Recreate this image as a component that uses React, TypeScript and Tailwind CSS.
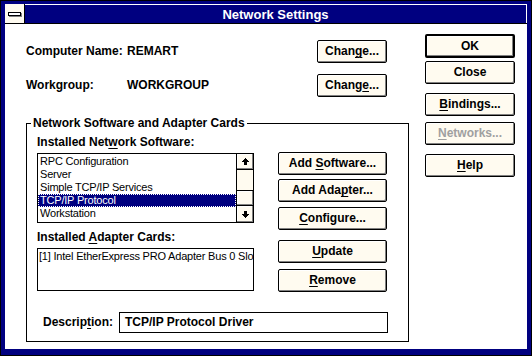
import React from "react";

type BtnProps = {
  children: React.ReactNode;
  className?: string;
  def?: boolean;
  disabled?: boolean;
};

function Btn({ children, className = "", def = false, disabled = false }: BtnProps) {
  return (
    <div
      className={`flex items-center justify-center bg-[#fffbf0] rounded-[2px] border-black ${
        def ? "border-2" : "border"
      } shadow-[inset_-1px_-1px_0_#808080,inset_1px_1px_0_#ffffff] text-[12px] leading-[15px] font-bold ${
        disabled ? "text-[#a0a0a0]" : "text-black"
      } ${className}`}
    >
      <span className="whitespace-pre">{children}</span>
    </div>
  );
}

function U({ children }: { children: React.ReactNode }) {
  return <span className="underline decoration-1 underline-offset-2">{children}</span>;
}

function Arrow({ down = false }: { down?: boolean }) {
  return (
    <svg width="7" height="7" viewBox="0 0 7 7" shapeRendering="crispEdges" className={down ? "rotate-180" : ""}>
      <rect x="3" y="0" width="1" height="1" fill="#000" />
      <rect x="2" y="1" width="3" height="1" fill="#000" />
      <rect x="1" y="2" width="5" height="1" fill="#000" />
      <rect x="0" y="3" width="7" height="1" fill="#000" />
      <rect x="2" y="4" width="3" height="3" fill="#000" />
    </svg>
  );
}

const items = ["RPC Configuration", "Server", "Simple TCP/IP Services", "TCP/IP Protocol", "Workstation"];

export default function App() {
  return (
    <div className="w-[532px] h-[356px] bg-[#000080] border border-black pt-[3px] pl-[4px] pr-[4px] pb-[6px] flex flex-col font-[family-name:Liberation_Sans,Arial,sans-serif] text-black">
      {/* Title bar */}
      <div className="flex h-[19px] shrink-0">
        <div className="w-[20px] bg-[#fffbf0] border-r border-black flex items-center justify-center">
          <div className="w-[13px] h-[4px] bg-white border border-black shadow-[1px_1px_0_#808080]" />
        </div>
        <div className="flex-1 bg-[#000080] border-t border-r border-white flex items-center justify-center text-white font-bold text-[13px] leading-[19px]">
          Network Settings
        </div>
      </div>
      <div className="h-px bg-black shrink-0" />

      {/* Client */}
      <div className="flex-1 bg-white flex pl-[21px] pt-[10px]">
        {/* Left part */}
        <div className="w-[383px] flex flex-col pt-[6px]">
          <div className="flex items-center h-[23px] text-[12px] leading-[15px] font-bold">
            <span className="w-[101px]">Computer Name:</span>
            <span className="w-[190px]">REMART</span>
            <Btn className="w-[70px] h-[23px]">
              Chan<U>g</U>e...
            </Btn>
          </div>
          <div className="flex items-center h-[23px] mt-[11px] text-[12px] leading-[15px] font-bold">
            <span className="w-[101px]">Workgroup:</span>
            <span className="w-[190px]">WORKGROUP</span>
            <Btn className="w-[70px] h-[23px]">
              Chang<U>e</U>...
            </Btn>
          </div>

          {/* Group box */}
          <div className="relative mt-[26px] border border-black pt-[11px] pl-[10px] pb-[8px]">
            <div className="absolute left-[4px] top-[-8px] bg-white px-[2px] text-[12px] leading-[15px] font-bold whitespace-nowrap">
              Network Software and Adapter Cards
            </div>
            <div className="flex items-start">
              <div className="w-[217px] flex flex-col">
                <div className="text-[12px] leading-[15px] font-bold h-[15px]">
                  Installed Net<U>w</U>ork Software:
                </div>
                <div className="mt-[3px] h-[70px] border border-black flex">
                  <div className="flex-1 pt-[1px] flex flex-col text-[11px] leading-[13px] tracking-[-0.2px]">
                    {items.map((it) => (
                      <div
                        key={it}
                        className={`h-[13px] pl-[2px] whitespace-nowrap ${
                          it === "TCP/IP Protocol"
                            ? "bg-[#000080] text-white outline-1 outline-dotted outline-white -outline-offset-1"
                            : ""
                        }`}
                      >
                        {it}
                      </div>
                    ))}
                  </div>
                  <div className="w-[17px] border-l border-black flex flex-col bg-[#fffbf0]">
                    <div className="h-[16px] border-b border-black flex items-center justify-center shadow-[inset_-1px_-1px_0_#808080,inset_1px_1px_0_#ffffff]">
                      <Arrow />
                    </div>
                    <div className="flex-1" />
                    <div className="h-[15px] border-t border-black shadow-[inset_-1px_-1px_0_#808080,inset_1px_1px_0_#ffffff]" />
                    <div className="h-[17px] border-t border-black flex items-center justify-center shadow-[inset_-1px_-1px_0_#808080,inset_1px_1px_0_#ffffff]">
                      <Arrow down />
                    </div>
                  </div>
                </div>
                <div className="mt-[7px] text-[12px] leading-[15px] font-bold h-[15px]">
                  Installed <U>A</U>dapter Cards:
                </div>
                <div className="mt-[3px] h-[43px] border border-black overflow-hidden pt-[1px] pl-[1px] text-[11px] leading-[13px] tracking-[-0.2px] whitespace-nowrap">
                  [1] Intel EtherExpress PRO Adapter Bus 0 Slot 5
                </div>
              </div>
              <div className="ml-[24px] w-[109px] mt-[17px] flex flex-col">
                <Btn className="h-[23px]">
                  Add <U>S</U>oftware...
                </Btn>
                <Btn className="h-[23px] mt-[4px]">
                  Add Ada<U>p</U>ter...
                </Btn>
                <Btn className="h-[23px] mt-[5px]">
                  <U>C</U>onfigure...
                </Btn>
                <Btn className="h-[23px] mt-[10px]">
                  <U>U</U>pdate
                </Btn>
                <Btn className="h-[23px] mt-[6px]">
                  <U>R</U>emove
                </Btn>
              </div>
            </div>
            <div className="flex items-center mt-[20px] text-[12px] leading-[15px] font-bold">
              <span className="w-[82px] pl-[6px]">
                Descrip<U>t</U>ion:
              </span>
              <div className="w-[269px] h-[21px] border border-black flex items-center pl-[5px]">
                TCP/IP Protocol Driver
              </div>
            </div>
          </div>
        </div>

        {/* Right column */}
        <div className="ml-[16px] w-[90px] flex flex-col">
          <Btn def className="h-[24px]">
            OK
          </Btn>
          <Btn className="h-[23px] mt-[3px]">Close</Btn>
          <Btn className="h-[23px] mt-[9px]">
            <U>B</U>indings...
          </Btn>
          <Btn disabled className="h-[23px] mt-[6px]">
            <U>N</U>etworks...
          </Btn>
          <Btn className="h-[23px] mt-[9px]">
            <U>H</U>elp
          </Btn>
        </div>
      </div>
    </div>
  );
}
